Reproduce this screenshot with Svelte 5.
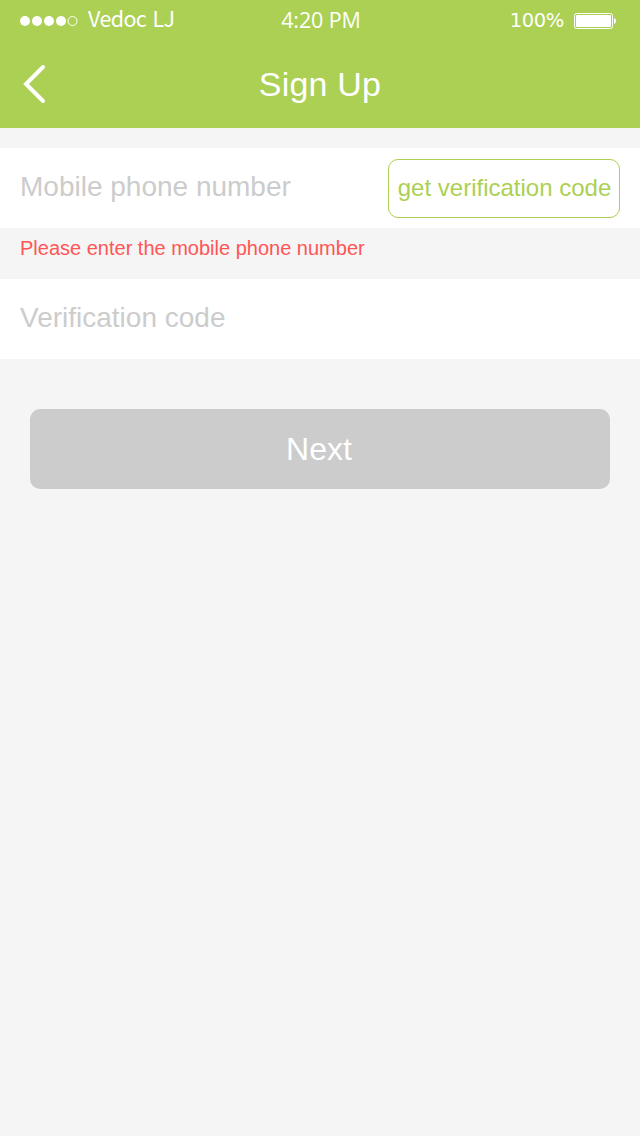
<script>
  const signals = [25, 37, 49, 61];
</script>

<main>
  <header>
    <div class="status">
      <div class="carrier">
        <svg width="60" height="12" viewBox="19 15 60 12">
          {#each signals as x}<circle cx={x} cy="22" r="5" fill="#fff" />{/each}
          <circle cx="72.5" cy="22" r="4.5" fill="none" stroke="#fff" />
        </svg>
        <span>Vedoc LJ</span>
      </div>
      <span class="time">4:20 PM</span>
      <div class="battery">
        <span>100%</span>
        <svg width="43" height="18" viewBox="0 0 43 18">
          <rect x=".5" y="1.5" width="38" height="15" rx="2" fill="none" stroke="#fff" />
          <rect x="2" y="3" width="35" height="12" rx="1" fill="#fff" />
          <path d="M40 6q2 .5 2 3t-2 3z" fill="#fff" />
        </svg>
      </div>
    </div>
    <div class="nav">
      <button class="back" aria-label="Back">
        <svg width="24" height="40" viewBox="0 0 24 40"><path d="M21 3 4 20l17 17" fill="none" stroke="#fff" stroke-width="4" stroke-linecap="round" /></svg>
      </button>
      <h1>Sign Up</h1>
    </div>
  </header>
  <section class="field phone">
    <span>Mobile phone number</span>
    <button class="verify">get verification code</button>
  </section>
  <p>Please enter the mobile phone number</p>
  <section class="field"><span>Verification code</span></section>
  <button class="next"><span>Next</span></button>
</main>

<style>
  :global(body) { margin: 0; background: #f5f5f5; }
  main { min-height: 1136px; background: #f5f5f5; font-family: "Liberation Sans", Arial, sans-serif; }
  button { font-family: inherit; padding: 0; border: 0; background: none; box-sizing: border-box; }
  header { height: 128px; background: #abd053; color: #fff; }
  .status { height: 40px; display: grid; grid-template-columns: 1fr auto 1fr; align-items: center; padding: 0 23px 0 19px; box-sizing: border-box; font: 22px/40px "Open Sans", sans-serif; }
  .carrier, .battery { display: flex; align-items: center; }
  .carrier { gap: 9px; }
  .carrier span { height: 40px; font: 21.5px/36px "Noto Sans CJK SC", sans-serif; letter-spacing: -.6px; word-spacing: 2px; }
  .time { height: 40px; line-height: 39px; font-size: 21.5px; letter-spacing: -.1px; padding-left: 6px; }
  .battery { justify-content: flex-end; gap: 10px; }
  .battery span { font: 19.5px/42px "DejaVu Sans", sans-serif; letter-spacing: -.4px; height: 40px; }
  .battery svg { margin-top: 2px; }
  .nav { height: 88px; display: grid; grid-template-columns: 60px 1fr 60px; align-items: center; }
  .back { margin-left: 22px; width: 24px; height: 40px; }
  .back svg { display: block; }
  h1 { margin: 0; font-size: 34px; line-height: 88px; font-weight: 400; text-align: center; letter-spacing: .2px; }
  .field { height: 80px; padding: 0 20px; box-sizing: border-box; display: flex; align-items: center; justify-content: space-between; background: #fff; color: #ccc; font-size: 28px; line-height: 78px; }
  .field > span { height: 80px; }
  .phone { margin-top: 20px; }
  .verify { width: 232px; height: 59px; border: 1px solid #abd053; border-radius: 10px; color: #abd053; font-size: 24px; line-height: 55px; padding: 0 0 3px 1px; white-space: nowrap; }
  p { margin: 0; height: 51px; padding-left: 20px; color: #ff5555; font-size: 20px; line-height: 41px; }
  .next { display: block; width: 580px; height: 80px; margin: 50px auto 0; border-radius: 10px; background: #ccc; color: #fff; font-size: 32px; line-height: 80px; }
  .next span { padding-right: 2px; }
</style>
